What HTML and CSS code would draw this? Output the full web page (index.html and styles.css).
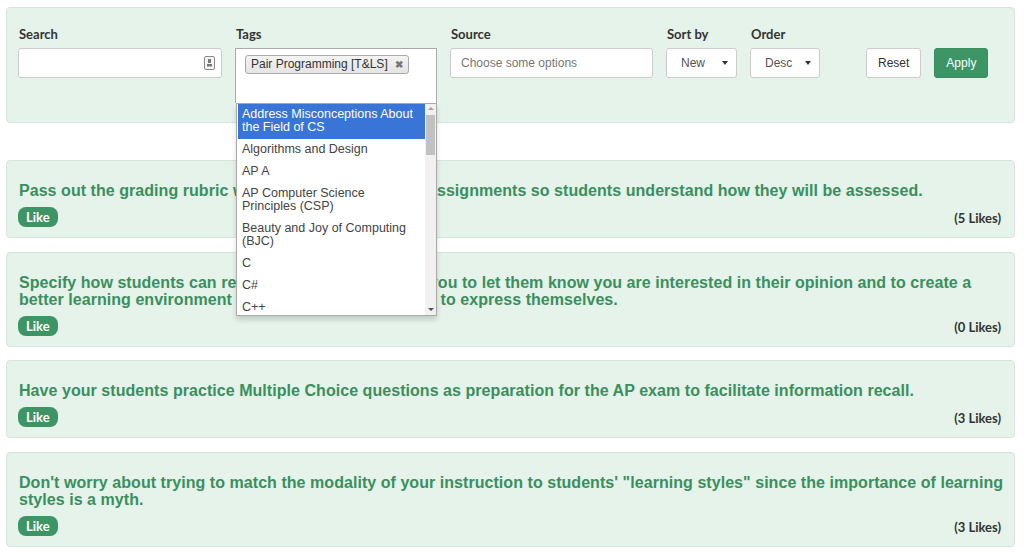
FILE: index.html
```html
<!DOCTYPE html>
<html lang="en">
<head>
  <meta charset="UTF-8">
  <title>Tips</title>
  <link rel="stylesheet" href="styles.css">
</head>
<body>
  <div class="filters">
    <div class="field field-search">
      <label>Search</label>
      <div class="input">
        <svg class="key-icon" width="11" height="14" viewBox="0 0 11 14"><rect x="0.5" y="0.5" width="10" height="13" rx="1.5" fill="#f4f4f4" stroke="#8a8a8a"/><rect x="4" y="3" width="3" height="4" fill="#777"/><rect x="3" y="8" width="5" height="2.5" fill="#777"/></svg>
      </div>
    </div>
    <div class="field field-tags">
      <label>Tags</label>
      <div class="chosen">
        <span class="chip">Pair Programming [T&amp;LS] <b>&#x2716;</b></span>
        <div class="drop">
          <ul class="options">
            <li class="hl">Address Misconceptions About the Field of CS</li>
            <li>Algorithms and Design</li>
            <li>AP A</li>
            <li>AP Computer Science Principles (CSP)</li>
            <li>Beauty and Joy of Computing (BJC)</li>
            <li>C</li>
            <li>C#</li>
            <li>C++</li>
          </ul>
          <div class="scroll">
            <span class="arr up"></span>
            <span class="thumb"></span>
            <span class="arr down"></span>
          </div>
        </div>
      </div>
    </div>
    <div class="field field-source">
      <label>Source</label>
      <div class="input placeholder">Choose some options</div>
    </div>
    <div class="field field-sort">
      <label>Sort by</label>
      <div class="select">New <i></i></div>
    </div>
    <div class="field field-order">
      <label>Order</label>
      <div class="select">Desc <i></i></div>
    </div>
    <div class="actions">
      <button class="btn">Reset</button>
      <button class="btn btn-green">Apply</button>
    </div>
  </div>

  <div class="tips">
    <div class="tip">
      <p>Pass out the grading rubric with each of their graded assignments so students understand how they will be assessed.</p>
      <div class="tip-foot"><span class="like">Like</span><span class="count">(5 Likes)</span></div>
    </div>
    <div class="tip">
      <p>Specify how students can reach out to easily contact you to let them know you are interested in their opinion and to create a better learning environment where they really feel safe to express themselves.</p>
      <div class="tip-foot"><span class="like">Like</span><span class="count">(0 Likes)</span></div>
    </div>
    <div class="tip">
      <p>Have your students practice Multiple Choice questions as preparation for the AP exam to facilitate information recall.</p>
      <div class="tip-foot"><span class="like">Like</span><span class="count">(3 Likes)</span></div>
    </div>
    <div class="tip">
      <p>Don't worry about trying to match the modality of your instruction to students' "learning styles" since the importance of learning styles is a myth.</p>
      <div class="tip-foot"><span class="like">Like</span><span class="count">(3 Likes)</span></div>
    </div>
  </div>
</body>
</html>
```

FILE: styles.css
```css
body {
  margin: 0;
  padding: 7px 9px 0 6px;
  font-family: "Liberation Sans", Arial, sans-serif;
  background: #fff;
}

.filters {
  display: flex;
  align-items: flex-start;
  height: 116px;
  padding: 18px 12px 0 11px;
  box-sizing: border-box;
  background: #e5f3ea;
  border: 1px solid #d3e6d9;
  border-radius: 4px;
  position: relative;
}

.field {
  margin-right: 13px;
}

.field label {
  display: block;
  font-family: Lato, "Open Sans", sans-serif;
  font-weight: bold;
  font-size: 13px;
  color: #333;
  height: 22px;
  line-height: 17px;
  padding-left: 1px;
}

.input {
  height: 30px;
  box-sizing: border-box;
  background: #fff;
  border: 1px solid #ccc;
  border-radius: 3px;
  position: relative;
}

.field-search .input { width: 204px; }
.field-source .input { width: 203px; }

.key-icon {
  position: absolute;
  right: 6px;
  top: 7px;
}

.placeholder {
  font-size: 12px;
  color: #777;
  line-height: 28px;
  padding-left: 10px;
}

.chosen {
  width: 202px;
  height: 55px;
  box-sizing: border-box;
  background: #fff;
  border: 1px solid #aaa;
  border-bottom: none;
  position: relative;
  padding: 5px 0 0 9px;
}

.chip {
  display: inline-block;
  font-size: 12px;
  color: #333;
  line-height: 16px;
  padding: 0 5px 0 5px;
  border: 1px solid #aaa;
  border-radius: 3px;
  background: linear-gradient(#f4f4f4, #e4e4e4);
}

.chip b {
  font-size: 10px;
  color: #777;
  margin-left: 4px;
}

.drop {
  position: absolute;
  left: 0;
  top: 54px;
  width: 201px;
  height: 213px;
  box-sizing: border-box;
  background: #fff;
  border: 1px solid #aaa;
  box-shadow: 0 4px 5px rgba(0, 0, 0, 0.15);
  display: flex;
  z-index: 5;
  overflow: hidden;
}

.options {
  list-style: none;
  margin: 0;
  padding: 0 0 0 1px;
  width: 188px;
}

.options li {
  font-size: 12.5px;
  line-height: 13px;
  color: #444;
  padding: 4px 5px 5px 4px;
}

.options li.hl {
  background: #3875d7;
  color: #fff;
}

.scroll {
  width: 11px;
  background: #f1f1f1;
  position: relative;
}

.scroll .thumb {
  position: absolute;
  left: 1px;
  top: 11px;
  width: 9px;
  height: 40px;
  background: #c1c1c1;
}

.scroll .arr {
  position: absolute;
  left: 3px;
  border-left: 3px solid transparent;
  border-right: 3px solid transparent;
}

.scroll .up { top: 3px; border-bottom: 3px solid #a3a3a3; }
.scroll .down { bottom: 4px; border-top: 3px solid #505050; }

.select {
  height: 30px;
  box-sizing: border-box;
  background: #fff;
  border: 1px solid #ccc;
  border-radius: 3px;
  font-size: 12px;
  color: #555;
  line-height: 28px;
  padding-left: 14px;
  position: relative;
}

.field-sort .select { width: 71px; }
.field-order .select { width: 70px; }

.select i {
  position: absolute;
  right: 8px;
  top: 12px;
  border-left: 3px solid transparent;
  border-right: 3px solid transparent;
  border-top: 4px solid #333;
}

.actions {
  display: flex;
  gap: 13px;
  margin-left: 33px;
  padding-top: 22px;
}

.btn {
  height: 30px;
  padding: 0 11px;
  font-family: "Liberation Sans", Arial, sans-serif;
  font-size: 12px;
  color: #333;
  background: #fff;
  border: 1px solid #ccc;
  border-radius: 3px;
}

.btn-green {
  background: #3d9464;
  border-color: #3a8d5f;
  color: #fff;
}

.tips {
  margin-top: 37px;
}

.tip {
  background: #e5f3ea;
  border: 1px solid #d3e6d9;
  border-radius: 4px;
  padding: 21px 13px 10px 11px;
  margin-bottom: 13.5px;
}

.tip p {
  margin: 0 -8px 8px 1px;
  font-weight: bold;
  font-size: 16px;
  line-height: 17px;
  letter-spacing: 0.05px;
  color: #3a8f5e;
}

.tip-foot {
  display: flex;
  justify-content: space-between;
  align-items: center;
  height: 20px;
}

.like {
  font-family: Lato, "Open Sans", sans-serif;
  font-weight: bold;
  font-size: 13px;
  color: #fff;
  background: #3d9464;
  border-radius: 8px;
  padding: 0 8px;
  line-height: 20px;
}

.count {
  font-family: Lato, "Open Sans", sans-serif;
  font-weight: bold;
  font-size: 13px;
  color: #333;
  padding-top: 2px;
}
```
